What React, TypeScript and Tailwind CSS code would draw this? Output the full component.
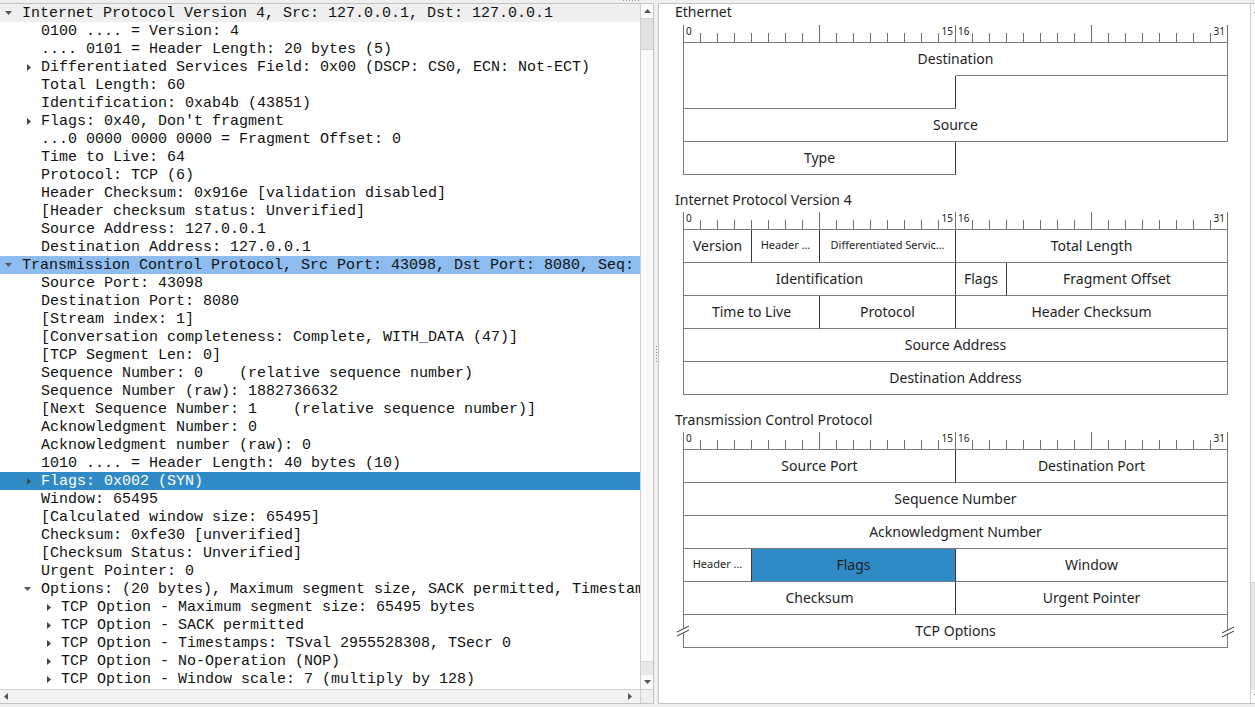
import React from 'react';

type Row = {level: number; arrow?: 'down' | 'right'; text: string; tone?: 'head' | 'proto' | 'sel'};

const rows: Row[] = [
    {level: 0, arrow: 'down', text: 'Internet Protocol Version 4, Src: 127.0.0.1, Dst: 127.0.0.1', tone: 'head'},
    {level: 1, text: '0100 .... = Version: 4'},
    {level: 1, text: '.... 0101 = Header Length: 20 bytes (5)'},
    {level: 1, arrow: 'right', text: 'Differentiated Services Field: 0x00 (DSCP: CS0, ECN: Not-ECT)'},
    {level: 1, text: 'Total Length: 60'},
    {level: 1, text: 'Identification: 0xab4b (43851)'},
    {level: 1, arrow: 'right', text: "Flags: 0x40, Don't fragment"},
    {level: 1, text: '...0 0000 0000 0000 = Fragment Offset: 0'},
    {level: 1, text: 'Time to Live: 64'},
    {level: 1, text: 'Protocol: TCP (6)'},
    {level: 1, text: 'Header Checksum: 0x916e [validation disabled]'},
    {level: 1, text: '[Header checksum status: Unverified]'},
    {level: 1, text: 'Source Address: 127.0.0.1'},
    {level: 1, text: 'Destination Address: 127.0.0.1'},
    {level: 0, arrow: 'down', text: 'Transmission Control Protocol, Src Port: 43098, Dst Port: 8080, Seq: 0, Len: 0', tone: 'proto'},
    {level: 1, text: 'Source Port: 43098'},
    {level: 1, text: 'Destination Port: 8080'},
    {level: 1, text: '[Stream index: 1]'},
    {level: 1, text: '[Conversation completeness: Complete, WITH_DATA (47)]'},
    {level: 1, text: '[TCP Segment Len: 0]'},
    {level: 1, text: 'Sequence Number: 0    (relative sequence number)'},
    {level: 1, text: 'Sequence Number (raw): 1882736632'},
    {level: 1, text: '[Next Sequence Number: 1    (relative sequence number)]'},
    {level: 1, text: 'Acknowledgment Number: 0'},
    {level: 1, text: 'Acknowledgment number (raw): 0'},
    {level: 1, text: '1010 .... = Header Length: 40 bytes (10)'},
    {level: 1, arrow: 'right', text: 'Flags: 0x002 (SYN)', tone: 'sel'},
    {level: 1, text: 'Window: 65495'},
    {level: 1, text: '[Calculated window size: 65495]'},
    {level: 1, text: 'Checksum: 0xfe30 [unverified]'},
    {level: 1, text: '[Checksum Status: Unverified]'},
    {level: 1, text: 'Urgent Pointer: 0'},
    {level: 1, arrow: 'down', text: 'Options: (20 bytes), Maximum segment size, SACK permitted, Timestamps, No-Operation (NOP), Window scale'},
    {level: 2, arrow: 'right', text: 'TCP Option - Maximum segment size: 65495 bytes'},
    {level: 2, arrow: 'right', text: 'TCP Option - SACK permitted'},
    {level: 2, arrow: 'right', text: 'TCP Option - Timestamps: TSval 2955528308, TSecr 0'},
    {level: 2, arrow: 'right', text: 'TCP Option - No-Operation (NOP)'},
    {level: 2, arrow: 'right', text: 'TCP Option - Window scale: 7 (multiply by 128)'},
];

const indent = ['pl-[0px]', 'pl-[19px]', 'pl-[39px]'];

function Twisty({dir}: {dir?: 'down' | 'right'}) {
    if (dir === 'down') {
        return (
            <svg width="7" height="4" viewBox="0 0 7 4" className="ml-[5px]">
                <path d="M0 0h7L3.5 4z" fill="#555"/>
            </svg>
        );
    }
    if (dir === 'right') {
        return (
            <svg width="4" height="7" viewBox="0 0 4 7" className="ml-[8px]">
                <path d="M0 0l4 3.5L0 7z" fill="#444"/>
            </svg>
        );
    }
    return null;
}

function TreeRow({row}: {row: Row}) {
    const tone =
        row.tone === 'head' ? 'bg-[#efefef] text-[#111]' :
        row.tone === 'proto' ? 'bg-[#8dbcef] text-[#111]' :
        row.tone === 'sel' ? 'bg-[#308ac6] text-white' : 'text-[#111]';
    return (
        <div className={`h-[18px] flex items-center whitespace-pre ${indent[row.level]} ${tone}`}>
            <div className="w-[22px] shrink-0 flex items-center">
                <Twisty dir={row.arrow}/>
            </div>
            <span className="pt-[1px]">{row.text}</span>
        </div>
    );
}

function Ruler() {
    const ticks = [];
    for (let i = 0; i <= 32; i++) {
        const tall = i % 8 === 0;
        const x = i * 17 + 0.5;
        ticks.push(<line key={i} x1={x} x2={x} y1={tall ? 5 : 13} y2={22} stroke="#707070" strokeWidth="1"/>);
    }
    return (
        <svg width="545" height="22" className="block">
            {ticks}
            <g fontFamily="'Noto Sans', sans-serif" fontSize="10" fill="#222">
                <text x="3" y="15">0</text>
                <text x="270" y="15" textAnchor="end">15</text>
                <text x="275" y="15">16</text>
                <text x="542" y="15" textAnchor="end">31</text>
            </g>
        </svg>
    );
}

type CellProps = {w: string; label?: string; last?: boolean; small?: boolean; blue?: boolean};

function Cell({w, label, last, small, blue}: CellProps) {
    return (
        <div
            className={`${w} h-[33px] shrink-0 flex items-center justify-center pb-[2px] border-b border-r border-b-[#7a7a7a] whitespace-nowrap overflow-hidden
                ${last ? 'border-r-[#7a7a7a]' : 'border-r-[#3a3a3a]'}
                ${small ? 'text-[11px]' : 'text-[14px]'}
                ${blue ? 'bg-[#308ac6]' : ''}`}
        >
            {label}
        </div>
    );
}

function Section({title, first, children}: {title: string; first?: boolean; children: React.ReactNode}) {
    return (
        <div className={first ? '' : 'mt-[16px]'}>
            <div className={`pl-[16px] h-[16px] leading-[16px] text-[14px] ${first ? '' : 'pt-[1px]'}`}>{title}</div>
            <div className="ml-[24px] w-[545px]">
                <Ruler/>
                <div className="border-t border-l border-[#7a7a7a]">{children}</div>
            </div>
        </div>
    );
}

function BreakMark() {
    return (
        <svg width="14" height="14" viewBox="0 0 14 14">
            <polygon points="1,9 13,3 13,7 1,13" fill="#fff"/>
            <path d="M1 9L13 3M1 13L13 7" stroke="#333" strokeWidth="1"/>
        </svg>
    );
}

export default function App() {
    return (
        <div className="w-[1255px] h-[707px] overflow-hidden bg-[#efefef] flex flex-col" style={{fontFamily: "'Noto Sans', sans-serif"}}>
            {/* top splitter grip */}
            <div className="h-[3px] flex items-start pl-[623px] gap-[2px]">
                {[0, 1, 2, 3, 4, 5].map((i) => (
                    <div key={i} className="w-px h-px bg-[#9a9a9a]"/>
                ))}
            </div>

            <div className="flex h-[701px]">
                {/* Packet details tree */}
                <div className="w-[654px] shrink-0 flex flex-col border-t border-b border-r border-[#c4c4c4] bg-white">
                    <div className="flex h-[685px]">
                        <div
                            className="w-[640px] overflow-hidden text-[15px] leading-[18px]"
                            style={{fontFamily: "'Liberation Mono', monospace"}}
                        >
                            {rows.map((r, i) => (
                                <TreeRow key={i} row={r}/>
                            ))}
                        </div>
                        <div className="w-[13px] flex flex-col border-l border-[#cfcfcf] bg-[#fafafa]">
                            <div className="h-[14px] flex items-center justify-center">
                                <svg width="7" height="4" viewBox="0 0 7 4"><path d="M0 4h7L3.5 0z" fill="#555"/></svg>
                            </div>
                            <div className="h-[32px] bg-[#e1e1e1] border-y border-[#d2d2d2]"/>
                            <div className="flex-1"/>
                            <div className="h-[14px] bg-[#e9e9e9] border-t border-[#dadada]"/>
                            <div className="h-[14px] flex items-center justify-center">
                                <svg width="7" height="4" viewBox="0 0 7 4"><path d="M0 0h7L3.5 4z" fill="#555"/></svg>
                            </div>
                        </div>
                    </div>
                    <div className="h-[14px] flex border-t border-[#cfcfcf]">
                        <div className="w-[640px] flex items-center justify-between px-[4px] bg-[#f3f3f3]">
                            <svg width="4" height="7" viewBox="0 0 4 7"><path d="M4 0L0 3.5L4 7z" fill="#555"/></svg>
                            <svg width="4" height="7" viewBox="0 0 4 7" className="mr-[4px]"><path d="M0 0l4 3.5L0 7z" fill="#555"/></svg>
                        </div>
                        <div className="flex-1 border-l border-[#cfcfcf] bg-[#efefef]"/>
                    </div>
                </div>

                {/* vertical splitter */}
                <div className="w-[4px] shrink-0 flex flex-col items-center justify-center gap-[2px]">
                    {[0, 1, 2, 3, 4, 5].map((i) => (
                        <div key={i} className="w-px h-px bg-[#8a8a8a]"/>
                    ))}
                </div>

                {/* Packet diagram */}
                <div className="flex-1 flex overflow-hidden border-t border-b border-l border-[#c4c4c4] bg-white text-[#1e1e1e]">
                    <div className="w-[591px] shrink-0">
                        <Section title="Ethernet" first>
                            <div className="h-[33px] flex flex-col border-r border-r-[#7a7a7a]">
                                <div className="h-[32px] flex items-center justify-center pb-[2px] text-[14px]">Destination</div>
                                <div className="h-px flex">
                                    <div className="w-[272px]"/>
                                    <div className="flex-1 bg-[#7a7a7a]"/>
                                </div>
                            </div>
                            <div className="flex">
                                <Cell w="w-[272px]"/>
                                <div className="w-[272px] h-[33px] border-r border-[#7a7a7a]"/>
                            </div>
                            <div className="flex">
                                <Cell w="w-[544px]" label="Source" last/>
                            </div>
                            <div className="flex">
                                <Cell w="w-[272px]" label="Type"/>
                            </div>
                        </Section>

                        <Section title="Internet Protocol Version 4">
                            <div className="flex">
                                <Cell w="w-[68px]" label="Version"/>
                                <Cell w="w-[68px]" label="Header …" small/>
                                <Cell w="w-[136px]" label="Differentiated Servic…" small/>
                                <Cell w="w-[272px]" label="Total Length" last/>
                            </div>
                            <div className="flex">
                                <Cell w="w-[272px]" label="Identification"/>
                                <Cell w="w-[51px]" label="Flags"/>
                                <Cell w="w-[221px]" label="Fragment Offset" last/>
                            </div>
                            <div className="flex">
                                <Cell w="w-[136px]" label="Time to Live"/>
                                <Cell w="w-[136px]" label="Protocol"/>
                                <Cell w="w-[272px]" label="Header Checksum" last/>
                            </div>
                            <div className="flex">
                                <Cell w="w-[544px]" label="Source Address" last/>
                            </div>
                            <div className="flex">
                                <Cell w="w-[544px]" label="Destination Address" last/>
                            </div>
                        </Section>

                        <Section title="Transmission Control Protocol">
                            <div className="flex">
                                <Cell w="w-[272px]" label="Source Port"/>
                                <Cell w="w-[272px]" label="Destination Port" last/>
                            </div>
                            <div className="flex">
                                <Cell w="w-[544px]" label="Sequence Number" last/>
                            </div>
                            <div className="flex">
                                <Cell w="w-[544px]" label="Acknowledgment Number" last/>
                            </div>
                            <div className="flex">
                                <Cell w="w-[68px]" label="Header …" small/>
                                <Cell w="w-[204px]" label="Flags" blue/>
                                <Cell w="w-[272px]" label="Window" last/>
                            </div>
                            <div className="flex">
                                <Cell w="w-[272px]" label="Checksum"/>
                                <Cell w="w-[272px]" label="Urgent Pointer" last/>
                            </div>
                            <div className="flex relative">
                                <Cell w="w-[544px]" label="TCP Options" last/>
                                <div className="absolute left-[-8px] top-[8px]"><BreakMark/></div>
                                <div className="absolute right-[-7px] top-[9px]"><BreakMark/></div>
                            </div>
                        </Section>
                    </div>
                    <div className="w-[13px] shrink-0 flex flex-col border-l border-[#cfcfcf] bg-[#fafafa]">
                        <div className="h-[14px] flex items-center justify-center">
                            <svg width="7" height="4" viewBox="0 0 7 4"><path d="M0 4h7L3.5 0z" fill="#555"/></svg>
                        </div>
                        <div className="h-[564px]"/>
                        <div className="flex-1 bg-[#e4e4e4] border-t border-[#d4d4d4]"/>
                        <div className="h-[14px] flex items-center justify-center">
                            <svg width="7" height="4" viewBox="0 0 7 4"><path d="M0 0h7L3.5 4z" fill="#555"/></svg>
                        </div>
                    </div>
                </div>
            </div>
        </div>
    );
}
